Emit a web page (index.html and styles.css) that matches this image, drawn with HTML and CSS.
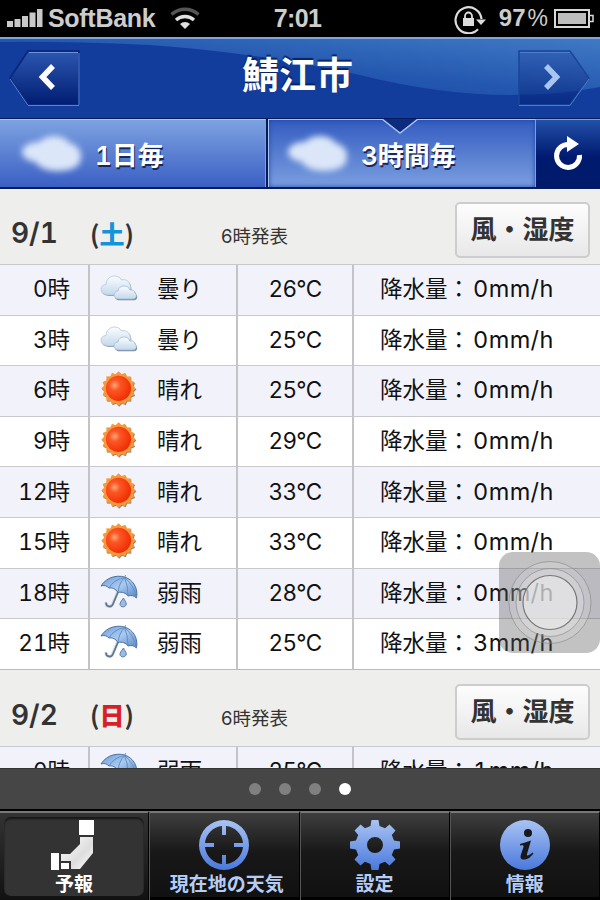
FILE: index.html
```
<!DOCTYPE html>
<html lang="ja">
<head>
  <meta charset="utf-8">
  <title>鯖江市の天気</title>
  <link rel="stylesheet" href="styles.css">
</head>
<body>
  <!-- shared icons -->
  <svg class="defs" width="0" height="0">
    <defs>
      <linearGradient id="cloudFill" x1="0" y1="0" x2="0" y2="1">
        <stop offset="0" stop-color="#fbfdff"/><stop offset="1" stop-color="#c3d8ec"/>
      </linearGradient>
      <radialGradient id="sunFill" cx="0.35" cy="0.38" r="0.7">
        <stop offset="0" stop-color="#ffa676"/><stop offset="0.3" stop-color="#fb5725"/><stop offset="1" stop-color="#f02a00"/>
      </radialGradient>
      <linearGradient id="umbFill" x1="0" y1="0" x2="1" y2="1">
        <stop offset="0" stop-color="#6f9fd9"/><stop offset="0.5" stop-color="#a9c9f0"/><stop offset="1" stop-color="#5485c6"/>
      </linearGradient>
      <linearGradient id="tabFill" x1="0" y1="0" x2="0" y2="1">
        <stop offset="0" stop-color="#a9c3f3"/><stop offset="1" stop-color="#4a79dc"/>
      </linearGradient>
      <linearGradient id="btnFill" x1="0" y1="0" x2="0" y2="1">
        <stop offset="0" stop-color="#2c57b0"/><stop offset="1" stop-color="#001d72"/>
      </linearGradient>
      <linearGradient id="glossFill" x1="0" y1="1" x2="1" y2="0">
        <stop offset="0" stop-color="#123d9c"/><stop offset="0.5" stop-color="#2458b0"/><stop offset="1" stop-color="#4079c4"/>
      </linearGradient>
      <linearGradient id="japanFill" x1="0" y1="0" x2="1" y2="1">
        <stop offset="0" stop-color="#fff"/><stop offset="0.6" stop-color="#ddd"/><stop offset="1" stop-color="#fff"/>
      </linearGradient>
      <filter id="soft" x="-30%" y="-30%" width="160%" height="160%"><feGaussianBlur stdDeviation="3.2"/></filter>
      <g id="rays">
        <path d="M0-17.500L17.500 0L0 17.500L-17.500 0Z"/>
        <path d="M0-17.500L17.500 0L0 17.500L-17.500 0Z" transform="rotate(22.500)"/>
        <path d="M0-17.500L17.500 0L0 17.500L-17.500 0Z" transform="rotate(45)"/>
        <path d="M0-17.500L17.500 0L0 17.500L-17.500 0Z" transform="rotate(67.500)"/>
      </g>
    </defs>
    <symbol id="cloud" viewBox="0 0 38 34">
      <path d="M7 23.500C3 23.500 1 21 1 18.500C1 15.500 3 13.500 6 13.500C6 8.500 10 5 14.500 5C18 5 20 6.500 21.500 9C26 7.500 30.500 11 30.500 16V24H7Z" fill="#7f92a5" transform="translate(.8 1)"/>
      <path d="M7 23.500C3 23.500 1 21 1 18.500C1 15.500 3 13.500 6 13.500C6 8.500 10 5 14.500 5C18 5 20 6.500 21.500 9C26 7.500 30.500 11 30.500 16V24H7Z" fill="url(#cloudFill)" stroke="#b3c6da" stroke-width=".8"/>
      <path d="M19 28C15.500 28 14 26 14 24C14 21.500 16 20 18 20C18.500 16.500 21 15 24 15C27 15 29 16.500 30 19C33 18.500 35 20 35 22C37 23 37 28 33 28Z" fill="#71869a" transform="translate(.9 1.200)"/>
      <path d="M19 28C15.500 28 14 26 14 24C14 21.500 16 20 18 20C18.500 16.500 21 15 24 15C27 15 29 16.500 30 19C33 18.500 35 20 35 22C37 23 37 28 33 28Z" fill="url(#cloudFill)" stroke="#a5bbd1" stroke-width=".8"/>
    </symbol>
    <symbol id="sun" viewBox="0 0 38 36">
      <use href="#rays" fill="#9c8468" transform="translate(19.200 18.500) scale(.98)"/>
      <use href="#rays" fill="#f8983a" transform="translate(18.500 17.500) scale(.98)"/>
      <circle cx="18.500" cy="17.300" r="12.600" fill="url(#sunFill)"/>
    </symbol>
    <symbol id="umbrella" viewBox="0 0 38 34">
      <path d="M18 16L12.500 29C11 33 5.500 32 6 27.500" fill="none" stroke="#d9e0e8" stroke-width="3.200"/>
      <path d="M18.500 16L13 29C11.500 33 6 32 6 27.500" fill="none" stroke="#5f758d" stroke-width="1.800"/>
      <path d="M1 11C7 1 20-1 28 3.500C35 7.500 38 15 36.500 23C34 20.500 31 20 28 21C26 18 22 16.500 18 17.500C15.500 13.500 12 12.500 9 13C6.500 10.500 4 10 1 11Z" fill="url(#umbFill)" stroke="#4a709f" stroke-width="1"/>
      <path d="M24.500 2.500Q13 5 9 13M24.500 2.500Q19 8 18 17.500M24.500 2.500Q28 10 28 21M24.500 2.500Q34 10 36.500 23M25 2L25.500 0" fill="none" stroke="#5e8bc2" stroke-width=".9"/>
      <path d="M23.500 23C21 26.500 19.800 28 20 29.500C20.500 33 26 32.500 26.300 29C26.300 27 24.500 25.500 23.500 23Z" fill="#9cbbe0" stroke="#5a7ba6"/>
    </symbol>
    <symbol id="blurcloud" viewBox="0 0 80 60">
      <g fill="#dbe6f9" filter="url(#soft)">
        <ellipse cx="41" cy="24" rx="17" ry="12"/>
        <ellipse cx="25" cy="28" rx="16" ry="10"/>
        <ellipse cx="45" cy="37" rx="22" ry="10"/>
        <ellipse cx="54" cy="32" rx="14" ry="13"/>
      </g>
    </symbol>
  </svg>

  <div class="screen">
    <div class="status">
      <div class="status-left">
        <svg class="signal" width="37" height="20" viewBox="0 0 37 20" fill="#c9c9c9">
          <path d="M1 13h6v6H1zM8.500 11h6v8h-6zM16 8h6v11h-6zM23.500 4.500h6v14.500h-6zM31 1h5.500v18h-5.500z"/>
        </svg>
        <span class="carrier">SoftBank</span>
        <svg class="wifi" width="30" height="23" viewBox="0 0 30 23" fill="none" stroke-width="3.400">
          <path d="M1.500 7.500A20 20 0 0 1 28.500 7.500" stroke="#555"/>
          <path d="M6 13A13.500 13.500 0 0 1 24 13" stroke="#e0e0e0"/>
          <path d="M15 22L10 17A7 7 0 0 1 20 17Z" fill="#e0e0e0" stroke="none"/>
        </svg>
      </div>
      <span class="clock">7:01</span>
      <div class="status-right">
        <svg class="lock" width="32" height="30" viewBox="0 0 32 30" fill="none">
          <path d="M24 25.200A13 13 0 1 1 27.500 15" stroke="#ddd" stroke-width="2.200"/>
          <path d="M22 15.500H32L27 21Z" fill="#ddd"/>
          <rect x="9" y="14" width="11" height="8" fill="#ddd"/>
          <path d="M11 15V12A3.500 3.500 0 0 1 18 12V15" stroke="#ddd" stroke-width="1.800"/>
        </svg>
        <span class="percent">97<i>%</i></span>
        <svg class="battery" width="40" height="20" viewBox="0 0 40 20">
          <rect x="1" y="1" width="34" height="17" fill="none" stroke="#d8d8d8" stroke-width="2"/>
          <rect x="4" y="4" width="28" height="11" fill="#bdbdbd"/>
          <path d="M36 6.500h3v6h-3" fill="none" stroke="#d8d8d8" stroke-width="1.500"/>
        </svg>
      </div>
    </div>

    <div class="header">
      <svg class="gloss" width="600" height="80" viewBox="0 0 600 80">
        <path d="M0 3Q60 2 150 6Q260 14 360 36Q440 56 510 56Q560 56 600 48V0H0Z" fill="url(#glossFill)"/>
      </svg>
      <svg class="nav" width="72" height="58" viewBox="0 0 72 58">
        <path d="M19 2H70V56H19L1 29Z" fill="url(#btnFill)" stroke="#0a2a80" stroke-width="2"/>
        <path d="M20 3.500H69" stroke="#6b92dd"/>
        <path d="M1 30L19 56.500H70V4" fill="none" stroke="#5b83d3"/>
        <path d="M44 17L33.500 28L44 39" fill="none" stroke="#fff" stroke-width="5.500"/>
      </svg>
      <h1>鯖江市</h1>
      <svg class="nav" width="72" height="58" viewBox="0 0 72 58">
        <path d="M1 2H52L71 29L52 56H1Z" fill="url(#btnFill)" fill-opacity=".55" stroke="#17469c" stroke-width="1.500"/>
        <path d="M2 3.500H52M1 56.500H52L71 30" fill="none" stroke="#4d7dc8"/>
        <path d="M28 17L38.500 28L28 39" fill="none" stroke="#a9c6f2" stroke-width="5.500"/>
      </svg>
    </div>

    <div class="tabs">
      <div class="tab">
        <svg class="tab-cloud" width="80" height="60"><use href="#blurcloud"/></svg>
        <span>1日毎</span>
      </div>
      <div class="tab active">
        <svg class="tab-cloud" width="80" height="60"><use href="#blurcloud"/></svg>
        <span>3時間毎</span>
        <svg class="notch" width="38" height="16" viewBox="0 0 38 16"><path d="M1 0L19 14L37 0" fill="#0c2b7e" stroke="#a8c2f2" stroke-width="1.500"/></svg>
      </div>
      <div class="reload">
        <svg width="32" height="36" viewBox="0 0 32 36">
          <path d="M17 9.500A11.500 11.500 0 1 0 27.500 20" fill="none" stroke="#fff" stroke-width="5"/>
          <path d="M15 1L27 9L15 17Z" fill="#fff"/>
        </svg>
      </div>
    </div>

    <div class="forecast">
      <div class="day">
        <span class="date">9/1</span>
        <span class="weekday">(<b class="sat">土</b>)</span>
        <span class="issued">6時発表</span>
        <span class="toggle">風・湿度</span>
      </div>
      <table>
        <tr><td class="hour">0時</td><td class="sky"><div><svg><use href="#cloud"/></svg>曇り</div></td><td class="temp">26°C</td><td class="rain">降水量：<span>0mm/h</span></td></tr>
        <tr><td class="hour">3時</td><td class="sky"><div><svg><use href="#cloud"/></svg>曇り</div></td><td class="temp">25°C</td><td class="rain">降水量：<span>0mm/h</span></td></tr>
        <tr><td class="hour">6時</td><td class="sky"><div><svg><use href="#sun"/></svg>晴れ</div></td><td class="temp">25°C</td><td class="rain">降水量：<span>0mm/h</span></td></tr>
        <tr><td class="hour">9時</td><td class="sky"><div><svg><use href="#sun"/></svg>晴れ</div></td><td class="temp">29°C</td><td class="rain">降水量：<span>0mm/h</span></td></tr>
        <tr><td class="hour">12時</td><td class="sky"><div><svg><use href="#sun"/></svg>晴れ</div></td><td class="temp">33°C</td><td class="rain">降水量：<span>0mm/h</span></td></tr>
        <tr><td class="hour">15時</td><td class="sky"><div><svg><use href="#sun"/></svg>晴れ</div></td><td class="temp">33°C</td><td class="rain">降水量：<span>0mm/h</span></td></tr>
        <tr><td class="hour">18時</td><td class="sky"><div><svg><use href="#umbrella"/></svg>弱雨</div></td><td class="temp">28°C</td><td class="rain">降水量：<span>0mm/h</span></td></tr>
        <tr><td class="hour">21時</td><td class="sky"><div><svg><use href="#umbrella"/></svg>弱雨</div></td><td class="temp">25°C</td><td class="rain">降水量：<span>3mm/h</span></td></tr>
      </table>
      <div class="day">
        <span class="date">9/2</span>
        <span class="weekday">(<b class="sun">日</b>)</span>
        <span class="issued">6時発表</span>
        <span class="toggle">風・湿度</span>
      </div>
      <table>
        <tr><td class="hour">0時</td><td class="sky"><div><svg><use href="#umbrella"/></svg>弱雨</div></td><td class="temp">25°C</td><td class="rain">降水量：<span>1mm/h</span></td></tr>
      </table>
    </div>

    <div class="pager">
      <i></i><i></i><i></i><i class="on"></i>
    </div>

    <div class="tabbar">
      <div class="item selected">
        <svg width="50" height="50" viewBox="0 0 50 50">
          <path d="M30 0H45V15H30Z" fill="#fff"/>
          <path d="M31 17H44V33L31 49H22V41H12V34H21L31 24Z" fill="url(#japanFill)"/>
          <path d="M2 33H10V50H2ZM12 43H20V49H12Z" fill="#fff"/>
        </svg>
        <span>予報</span>
      </div>
      <div class="item here">
        <svg width="50" height="50" viewBox="0 0 50 50" fill="url(#tabFill)">
          <path fill-rule="evenodd" d="M25 0A25 25 0 1 0 25 50A25 25 0 1 0 25 0ZM27 6A19 19 0 0 1 44 23H35V27H44A19 19 0 0 1 27 44V35H23V44A19 19 0 0 1 6 27H15V23H6A19 19 0 0 1 23 6V15H27Z"/>
        </svg>
        <span>現在地の天気</span>
      </div>
      <div class="item">
        <svg width="50" height="50" viewBox="0 0 50 50" fill="url(#tabFill)">
          <path fill-rule="evenodd" d="M21.500 0H28.500L29.500 6L35 8.200L39.500 4.500L45.500 10.500L41.800 15L44 20.500L50 21.500V28.500L44 29.500L41.800 35L45.500 39.500L39.500 45.500L35 41.800L29.500 44L28.500 50H21.500L20.500 44L15 41.800L10.500 45.500L4.500 39.500L8.200 35L6 29.500L0 28.500V21.500L6 20.500L8.200 15L4.500 10.500L10.500 4.500L15 8.200L20.500 6ZM25 17A8 8 0 1 0 25 33A8 8 0 1 0 25 17Z"/>
        </svg>
        <span>設定</span>
      </div>
      <div class="item">
        <svg width="50" height="50" viewBox="0 0 50 50">
          <circle cx="25" cy="25" r="25" fill="url(#tabFill)"/>
          <circle cx="28" cy="13" r="4" fill="#17181c"/>
          <path d="M20 24C23 23 27 22 31 20.500L27 34C26.500 36 28 36.500 32.500 32.500L33.500 33.500C30 38 27 39.500 24 39.500C20.500 39.500 20 37.500 21 34.500L23.500 27C24 25.500 23 25 20 25.500Z" fill="#17181c"/>
        </svg>
        <span>情報</span>
      </div>
    </div>

    <div class="assist">
      <svg width="101" height="101" viewBox="0 0 101 101">
        <circle cx="51" cy="50.500" r="41" fill="#fff" fill-opacity=".14" stroke="#777" stroke-opacity=".5"/>
        <circle cx="51" cy="50.500" r="34" fill="#fff" fill-opacity=".2" stroke="#777" stroke-opacity=".5"/>
        <circle cx="51" cy="50.500" r="27" fill="#f0f0f2" fill-opacity=".5" stroke="#777" stroke-width="1.200"/>
      </svg>
    </div>
  </div>
</body>
</html>
```

FILE: styles.css
```
body {
  margin: 0;
  background: #000;
  font-family: "Noto Sans CJK JP", sans-serif;
  color: #111;
}

.defs {
  position: absolute;
}

svg {
  flex: none;
}

.screen {
  position: relative;
  display: flex;
  flex-direction: column;
  width: 600px;
  height: 900px;
  overflow: hidden;
}

/* status bar */
.status {
  display: grid;
  grid-template-columns: 1fr auto 1fr;
  align-items: center;
  height: 37px;
  padding: 0 6px 2px;
  box-sizing: border-box;
  background: #000;
  color: #cdcdcd;
  font: bold 25px/35px "Liberation Sans", sans-serif;
}

.status-left,
.status-right {
  display: flex;
  align-items: center;
}

.status-right {
  justify-content: flex-end;
}

.signal {
  margin: 0 5px 0 0;
}

.carrier {
  width: 107px;
  letter-spacing: -0.3px;
}

.wifi {
  margin-left: 15px;
}

.clock {
  margin-right: 5px;
  letter-spacing: -0.6px;
}

.lock,
.battery {
  margin-bottom: -1px;
}

.percent {
  margin: 0 6px 0 13px;
  font-size: 24px;
}

.percent i {
  margin-left: 2px;
  font-style: normal;
  font-weight: normal;
  font-size: 23px;
}

/* header */
.header {
  position: relative;
  display: flex;
  justify-content: space-between;
  height: 82px;
  padding: 10px 10px 0 9px;
  box-sizing: border-box;
  border-top: 2px solid #7ea5dd;
  border-bottom: 1px solid #061c5c;
  background: #123d9c;
}

.gloss {
  position: absolute;
  top: 0;
  left: 0;
}

.nav {
  position: relative;
}

.header h1 {
  position: relative;
  margin: 0;
  padding-right: 4px;
  color: #fff;
  font-size: 37px;
  line-height: 48px;
  text-shadow: 0 -2px 1px #0b2360;
}

/* day / 3 hour tabs */
.tabs {
  display: flex;
  height: 70px;
  box-sizing: border-box;
  border-bottom: 2px solid #051a5a;
  background: #051a5a;
}

.tab {
  position: relative;
  display: flex;
  align-items: center;
  width: 266px;
  box-sizing: border-box;
  padding-left: 13px;
  border-top: 1px solid #a9c4f2;
  border-right: 1px solid #7c9fe2;
  background: linear-gradient(#7da2e0, #3a5fc4);
  color: #fff;
  font-family: Inter, "Noto Sans CJK JP", sans-serif;
  font-size: 26px;
  font-weight: 600;
  font-variant-numeric: tabular-nums;
  line-height: 36px;
  text-shadow: 1px 2px 0 #16275e;
}

.tab span {
  padding-top: 5px;
  margin-left: 2px;
}

.tab.active {
  width: 268px;
  margin-left: 2px;
  padding-left: 10px;
  border-left: 1px solid #a9c4f2;
  background: linear-gradient(#345cc0, #7a9fe0);
  box-shadow: inset 0 0 5px #1f48aa;
}

.notch {
  position: absolute;
  top: -1px;
  left: 112px;
}

.reload {
  display: flex;
  flex: 1;
  align-items: center;
  justify-content: center;
  padding-bottom: 2px;
  border-top: 1px solid #7c9fe2;
  background: linear-gradient(#2350a8, #001a70 55%, #001a6a);
}

/* forecast list */
.forecast {
  height: 579px;
  overflow: hidden;
  background: #eeeeec;
}

.day {
  display: flex;
  align-items: center;
  height: 75px;
  padding: 0 10px 0 11px;
  color: #333;
}

table + .day {
  padding-top: 1px;
}

.date {
  width: 79px;
  padding-top: 13px;
  font-family: Inter, sans-serif;
  font-size: 28px;
  font-weight: 600;
  font-variant-numeric: tabular-nums;
  line-height: 40px;
}

.weekday {
  width: 131px;
  padding-top: 12px;
  font-size: 25px;
  font-weight: bold;
}

.sat {
  color: #1493dd;
}

.sun {
  color: #d81e26;
}

.issued {
  padding-top: 19px;
  font-family: Inter, "Noto Sans CJK JP", sans-serif;
  font-size: 18.500px;
  line-height: 28px;
}

.toggle {
  width: 131px;
  height: 52px;
  margin: 7px 0 0 auto;
  border: 2px solid #cdcdcd;
  border-radius: 5px;
  background: linear-gradient(#fdfdfd, #e8e8e8);
  font-size: 26px;
  font-weight: bold;
  line-height: 47px;
  text-align: center;
}

table {
  width: 600px;
  table-layout: fixed;
  border-collapse: separate;
  border-spacing: 0;
  border-bottom: 1px solid #bbb;
}

td {
  height: 50.600px;
  padding: 0 0 1px;
  box-sizing: border-box;
  border-top: 1px solid #c9c9cd;
  border-right: 2px solid #c4c4c8;
  background: #fff;
  font-family: Inter, "Noto Sans CJK JP", sans-serif;
  font-size: 22.500px;
  font-variant-numeric: tabular-nums;
  line-height: 32px;
  white-space: nowrap;
}

tr:nth-child(odd) td {
  background: #f2f3fa;
}

td:last-child {
  border-right: 0;
}

.hour {
  width: 90px;
  padding-right: 18px;
  text-align: right;
}

.sky {
  width: 148px;
}

.sky div {
  display: flex;
  align-items: center;
  padding-left: 10px;
}

.sky svg {
  width: 38px;
  height: 36px;
  margin: -1px 19px 1px 0;
}

.temp {
  width: 116px;
  text-align: center;
  letter-spacing: -0.6px;
}

.rain {
  padding-left: 26px;
}

.rain span {
  margin-left: 3px;
  font-size: 23.500px;
  letter-spacing: 0.4px;
}

/* page dots */
.pager {
  display: flex;
  justify-content: center;
  align-items: center;
  gap: 18px;
  height: 41px;
  box-sizing: border-box;
  border-top: 1px solid #333;
  background: #464646;
}

.pager i {
  width: 12px;
  height: 12px;
  border-radius: 50%;
  background: #808080;
}

.pager .on {
  background: #fff;
}

/* bottom bar */
.tabbar {
  display: flex;
  height: 91px;
  box-sizing: border-box;
  border-top: 2px solid #000;
  background: #000;
}

.item {
  display: flex;
  flex: 1;
  flex-direction: column;
  align-items: center;
  box-sizing: border-box;
  padding-top: 7px;
  border-top: 2px solid #777;
  border-right: 1px solid #000;
  border-left: 1px solid #555;
  background: linear-gradient(#3e3e3e, #181818 45%, #111 96%, #000 97%);
  color: #b4ccf6;
  font-size: 19px;
  font-weight: bold;
}

.item span {
  line-height: 26px;
}

.item:first-child {
  border-left: 0;
}

.here span {
  padding-left: 5px;
}

.selected {
  background: linear-gradient(#333, #111);
  color: #fff;
  position: relative;
}

.selected::before {
  content: "";
  position: absolute;
  top: 4px;
  right: 4px;
  bottom: 4px;
  left: 4px;
  border-radius: 7px;
  background: #333;
  box-shadow: inset 0 2px 2px #181818;
}

.selected svg,
.selected span {
  position: relative;
}

/* floating touch button */
.assist {
  position: absolute;
  top: 552px;
  left: 499px;
  width: 101px;
  height: 101px;
  border-radius: 14px;
  background: rgba(85, 85, 88, 0.36);
}
```
